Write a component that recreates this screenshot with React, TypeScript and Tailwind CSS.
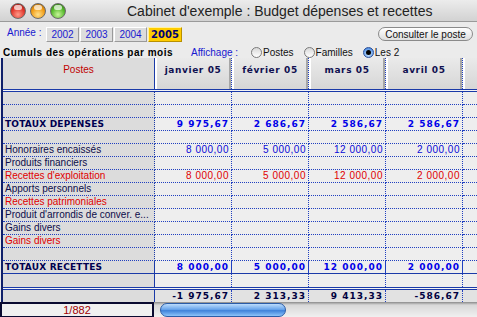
import React from 'react';

type Kind = 'empty' | 'total' | 'navy' | 'red';

type Row = {
  label?: string;
  kind: Kind;
  values?: string[];
  bottom?: 'dotted' | 'solid' | 'none';
};

const months = ['janvier 05', 'février 05', 'mars 05', 'avril 05'];

const rows: Row[] = [
  { kind: 'empty' },
  { kind: 'empty' },
  { label: 'TOTAUX DEPENSES', kind: 'total', values: ['9 975,67', '2 686,67', '2 586,67', '2 586,67'] },
  { kind: 'empty' },
  { label: 'Honoraires encaissés', kind: 'navy', values: ['8 000,00', '5 000,00', '12 000,00', '2 000,00'] },
  { label: 'Produits financiers', kind: 'navy' },
  { label: "Recettes d'exploitation", kind: 'red', values: ['8 000,00', '5 000,00', '12 000,00', '2 000,00'] },
  { label: 'Apports personnels', kind: 'navy' },
  { label: 'Recettes patrimoniales', kind: 'red' },
  { label: "Produit d'arrondis de conver. e...", kind: 'navy' },
  { label: 'Gains divers', kind: 'navy' },
  { label: 'Gains divers', kind: 'red' },
  { kind: 'empty' },
  { label: 'TOTAUX RECETTES', kind: 'total', values: ['8 000,00', '5 000,00', '12 000,00', '2 000,00'], bottom: 'solid' },
  { kind: 'empty', bottom: 'none' },
];

const soldes = ['-1 975,67', '2 313,33', '9 413,33', '-586,67'];

function Light({ color }: { color: 'red' | 'yellow' | 'green' }) {
  const bg =
    color === 'red'
      ? 'bg-[radial-gradient(circle_at_50%_75%,#ff9a8a,#e0352a_55%,#8c120c)]'
      : color === 'yellow'
        ? 'bg-[radial-gradient(circle_at_50%_75%,#ffe08a,#f09a12_55%,#9a5a06)]'
        : 'bg-[radial-gradient(circle_at_50%_75%,#c8f59a,#54b82a_55%,#2a6a12)]';
  return (
    <div className={`relative w-[16px] h-[16px] rounded-full border border-[#6a6a6a] ${bg}`}>
      <span className="absolute left-[3px] top-[1px] w-[8px] h-[5px] rounded-full bg-white/70" />
    </div>
  );
}

function Radio({ label, checked }: { label: string; checked?: boolean }) {
  return (
    <div className="flex items-center gap-[1px]">
      <div
        className={`w-[11px] h-[11px] rounded-full border flex items-center justify-center ${
          checked
            ? 'border-[#2a4f9a] bg-[radial-gradient(circle_at_50%_70%,#cde6ff,#5f9ae6_70%,#2f65c0)]'
            : 'border-[#7a7a7a] bg-[linear-gradient(#d8d8d8,#ffffff)]'
        }`}
      >
        {checked && <div className="w-[5px] h-[5px] rounded-full bg-black" />}
      </div>
      <span className="text-[10px] text-[#111]">{label}</span>
    </div>
  );
}

export default function App() {
  const labelColor = (k: Kind) =>
    k === 'red' ? 'text-[#e00000]' : k === 'total' ? 'text-[#000050]' : 'text-[#0c0c4a]';
  const valueColor = (k: Kind) => (k === 'red' ? 'text-[#e00000]' : 'text-[#0a0ad8]');

  return (
    <div className="w-[477px] h-[317px] overflow-hidden flex flex-col bg-[#ebebeb] font-['Liberation_Sans',Arial,sans-serif]">
      {/* title bar */}
      <div className="h-[22px] shrink-0 flex items-center bg-[linear-gradient(#ececec,#d2d2d2)] border-b border-[#9a9a9a]">
        <div className="flex items-center gap-[4px] pl-[10px]">
          <Light color="red" />
          <Light color="yellow" />
          <Light color="green" />
        </div>
        <div className="pl-[61px] text-[14px] leading-[16px] text-[#222] whitespace-nowrap">
          Cabinet d'exemple : Budget dépenses et recettes
        </div>
      </div>

      {/* year tabs + button */}
      <div className="h-[20px] shrink-0 flex items-end">
        <span className="pl-[7px] w-[46px] pb-[2px] text-[10px] text-[#1818d0] whitespace-nowrap">Année :</span>
        <div className="flex gap-[1px]">
          {['2002', '2003', '2004'].map((y) => (
            <div
              key={y}
              className="w-[33px] h-[15px] flex items-center justify-center bg-[#dcdcdc] border border-t-white border-l-white border-r-[#9a9a9a] border-b-[#9a9a9a] text-[10px] text-[#1a1ad0]"
            >
              {y}
            </div>
          ))}
          <div className="w-[34px] h-[15px] flex items-center justify-center bg-[#ffcc00] border border-t-[#fff2a0] border-l-[#fff2a0] border-r-[#b89000] border-b-[#b89000] text-[10px] font-bold text-[#000070] font-['DejaVu_Sans',sans-serif]">
            2005
          </div>
        </div>
        <div className="ml-auto mr-[4px] mb-[1px] w-[95px] h-[14px] rounded-full border border-[#8a8a8a] bg-[linear-gradient(#ffffff,#dedede)] flex items-center justify-center text-[10px] text-[#111] whitespace-nowrap">
          Consulter le poste
        </div>
      </div>

      {/* cumuls + affichage */}
      <div className="h-[16px] shrink-0 pt-[5px] flex items-center">
        <span className="pl-[3px] w-[191px] text-[10px] font-bold tracking-[0.5px] text-black whitespace-nowrap">
          Cumuls des opérations par mois
        </span>
        <span className="w-[60px] text-[10px] text-[#1818d0] whitespace-nowrap">Affichage :</span>
        <div className="flex gap-[10px]">
          <Radio label="Postes" />
          <Radio label="Familles" />
          <Radio label="Les 2" checked />
        </div>
      </div>

      {/* table */}
      <div className="ml-[1px] border-l-2 border-[#10206a] flex flex-col">
        {/* header */}
        <div className="h-[31px] grid grid-cols-[152px_77px_77px_77px_77px_1fr]">
          <div className="bg-[#dcdcdc] border-r border-[#1a3aa8] flex justify-center pt-[6px]">
            <span className="text-[10px] leading-[12px] text-[#c00000]">Postes</span>
          </div>
          {months.map((m) => (
            <div key={m} className="border-r border-dotted border-[#2040c0] flex">
              <div className="flex-1 flex justify-center pt-[6px] bg-[linear-gradient(#eaeaea,#d6d6d6)] border-l-2 border-l-white border-r-2 border-r-[#a6a6a6]">
                <span className="text-[9px] leading-[12px] font-bold tracking-[0.6px] text-[#101050] font-['DejaVu_Sans',sans-serif] whitespace-nowrap">
                  {m}
                </span>
              </div>
            </div>
          ))}
          <div className="bg-[linear-gradient(#eaeaea,#d6d6d6)] border-l-2 border-white" />
        </div>

        <div className="h-[3px] border-t border-b border-[#1a3aa8] bg-[#f4f4f4]" />

        {rows.map((r, i) => {
          const b =
            r.bottom === 'solid'
              ? 'border-b border-solid border-b-[#1a3aa8]'
              : r.bottom === 'none'
                ? ''
                : 'border-b border-dotted border-b-[#2040c0]';
          const total = r.kind === 'total';
          return (
            <div key={i} className="h-[13px] grid grid-cols-[152px_77px_77px_77px_77px_1fr]">
              <div className={`bg-[#dcdcdc] border-r border-r-[#1a3aa8] ${b} flex items-center pl-[2px] overflow-hidden`}>
                {r.label && (
                  <span
                    className={`whitespace-nowrap leading-[12px] ${labelColor(r.kind)} ${
                      total
                        ? "text-[9px] font-bold tracking-[0.2px] font-['DejaVu_Sans',sans-serif]"
                        : 'text-[10px]'
                    }`}
                  >
                    {r.label}
                  </span>
                )}
              </div>
              {months.map((m, j) => (
                <div
                  key={m}
                  className={`bg-[#eeeeee] border-r border-dotted border-r-[#2040c0] ${b} flex items-center justify-end pr-[2px]`}
                >
                  {r.values && (
                    <span
                      className={`whitespace-nowrap leading-[12px] ${
                        total
                          ? "text-[9px] font-bold tracking-[1px] text-[#0000e8] font-['DejaVu_Sans',sans-serif]"
                          : `text-[10px] tracking-[0.5px] ${valueColor(r.kind)}`
                      }`}
                    >
                      {r.values[j]}
                    </span>
                  )}
                </div>
              ))}
              <div className={`bg-[#eeeeee] ${b}`} />
            </div>
          );
        })}

        <div className="h-[3px] border-t border-b border-[#1a3aa8] bg-[#f4f4f4]" />

        {/* soldes */}
        <div className="h-[12px] grid grid-cols-[152px_77px_77px_77px_77px_1fr] bg-[#e2e2e2]">
          <div className="border-r border-[#1a3aa8] bg-[#dcdcdc]" />
          {soldes.map((s) => (
            <div key={s} className="border-r border-dotted border-[#2040c0] flex items-center justify-end pr-[2px]">
              <span className="text-[9px] leading-[11px] font-bold tracking-[1px] text-[#000040] font-['DejaVu_Sans',sans-serif] whitespace-nowrap">
                {s}
              </span>
            </div>
          ))}
          <div />
        </div>
      </div>

      {/* status bar */}
      <div className="flex-1 flex bg-[linear-gradient(#8a8a8a,#d8d8d8_3px,#f2f2f2)]">
        <div className="w-[154px] border-2 border-[#0a0a30] bg-[#f0f0f0] flex items-center justify-center">
          <span className="text-[11px] leading-[12px] text-[#a00000]">1/882</span>
        </div>
        <div className="ml-[6px] mt-[1px] w-[126px] h-[14px] rounded-full border border-[#2a5ca8] bg-[linear-gradient(#bcdcfc,#6aa6ec_45%,#3f82da_55%,#8cc4fa)]" />
      </div>
    </div>
  );
}
